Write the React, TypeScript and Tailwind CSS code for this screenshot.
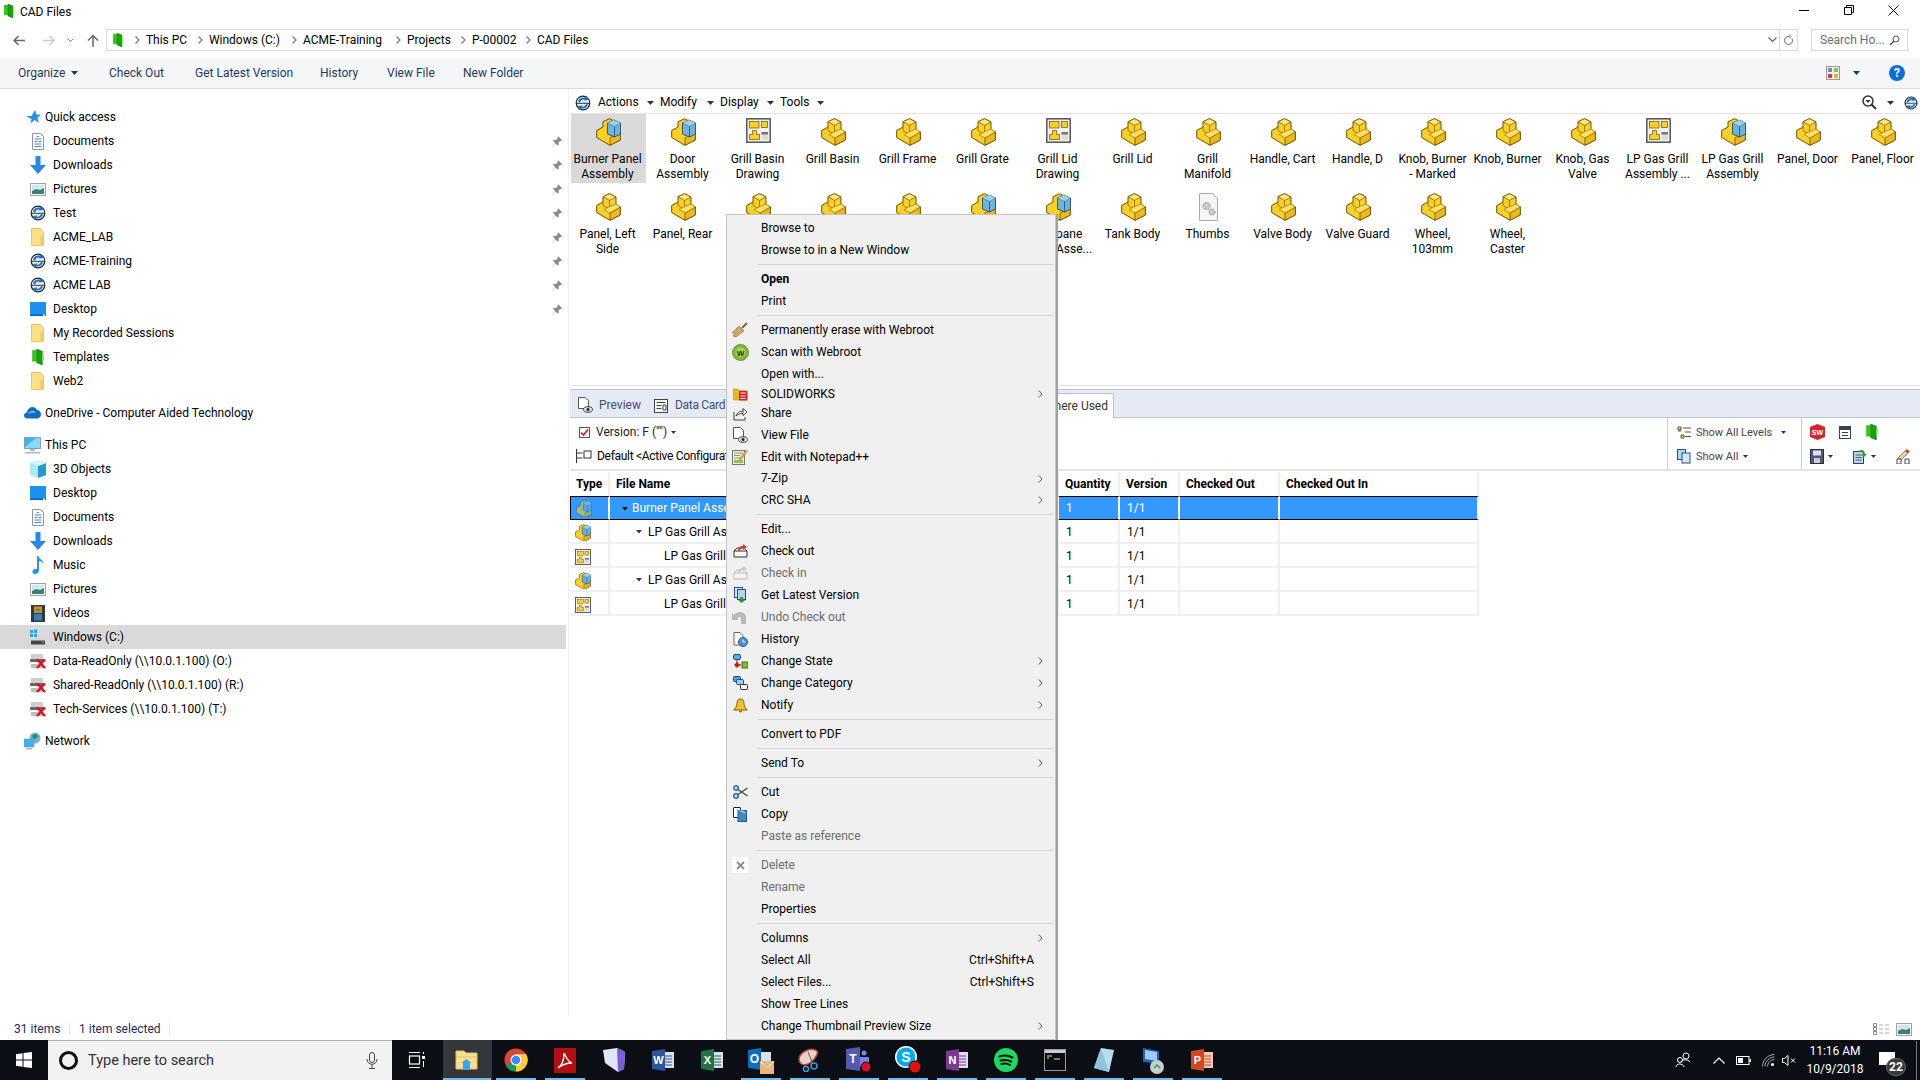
import React from "react";

type P = { s?: number };
const Part = ({ s = 25 }: P) => (
  <svg width={s} height={s * 1.12} viewBox="0 0 25 28">
    <path d="M.7 12.5 7 9V3.7L13.5.7 20 4v7.5l4.3 2.5v8L14 27.3.7 19.5z" fill="#f9cf2a" stroke="#6b5200" strokeWidth="1" />
    <path d="M7 3.7 13.5.7 20 4l-6.5 3.4z" fill="#fde67f" stroke="#6b5200" strokeWidth=".7" />
    <path d="M13.5 7.4V14M7 9v3.5l7 4M14 16.5l6-3.5 4.3 1-10.3 6z" fill="none" stroke="#8a6a00" strokeWidth=".8" />
    <path d="M14 20v7.3L24.3 22v-8z" fill="#efb81c" stroke="#6b5200" strokeWidth=".8" />
    <path d="M14 20 8 16.5 14 13.5 20 11l4.3 3z" fill="#fde067" stroke="#8a6a00" strokeWidth=".6" />
  </svg>
);
const Asm = ({ s = 25 }: P) => (
  <svg width={s} height={s * 1.12} viewBox="0 0 25 28">
    <path d="M.7 12.5 7 9V3.7L13.5.7 20 4v7.5l4.3 2.5v8L14 27.3.7 19.5z" fill="#f9cf2a" stroke="#6b5200" strokeWidth="1" />
    <path d="M14 20v7.3L24.3 22v-8z" fill="#efb81c" stroke="#6b5200" strokeWidth=".8" />
    <path d="M11.5 5 18 2l6.5 3v11l-6 3-7-3z" fill="#6fb2da" stroke="#24506e" strokeWidth=".9" />
    <path d="M11.5 5l7 3.2L24.5 5M18.5 8.2V19" fill="none" stroke="#24506e" strokeWidth=".8" />
    <path d="M11.5 5 18 2l6.5 3-6 3.2z" fill="#9cd0ea" />
  </svg>
);
const Dwg = ({ s = 25 }: P) => (
  <svg width={s} height={s} viewBox="0 0 25 25">
    <rect x=".8" y=".8" width="23.4" height="23.4" fill="#f1f1f1" stroke="#555" strokeWidth="1.5" />
    <rect x="3.5" y="3.5" width="9.5" height="6.5" fill="#f9cf2a" stroke="#6b5200" strokeWidth=".7" />
    <rect x="15.5" y="3.5" width="6" height="6" fill="#f9cf2a" stroke="#6b5200" strokeWidth=".7" />
    <path d="M6.500 12.500h4v4h3v5h-10v-5h3z" fill="#f9cf2a" stroke="#6b5200" strokeWidth=".7" />
    <rect x="15.500" y="14" width="6.500" height="8" fill="#ddd" />
    <rect x="15.500" y="14" width="6.500" height="2.500" fill="#777" />
  </svg>
);
const Thumbs = () => (
  <svg width="25" height="28" viewBox="0 0 25 28">
    <path d="M3.500.5h13l5 5v22h-18z" fill="#f6f6f6" stroke="#aaa" />
    <circle cx="10.500" cy="13" r="3.600" fill="#ccc" stroke="#888" strokeDasharray="1.500 1" />
    <circle cx="16" cy="19" r="3" fill="#ccc" stroke="#888" strokeDasharray="1.500 1" />
  </svg>
);

const Green = ({ s = 14 }: P) => (
  <svg width={s * 0.85} height={s} viewBox="0 0 12 14">
    <path d="M1 1h4v10H1z" fill="#3fc21a" />
    <path d="M5 0l5 2v12l-5-2z" fill="#16a30e" stroke="#0c7a0a" strokeWidth=".5" />
    <path d="M10 4h1.500v6H10z" fill="#9fe37f" />
  </svg>
);
const Vault = ({ s = 16 }: P) => (
  <svg width={s} height={s} viewBox="0 0 16 16">
    <circle cx="8" cy="8" r="6.800" fill="#e4edf7" stroke="#222" strokeWidth="1.200" />
    <path d="M3 6.500c1-3 4-4.500 7-4l1-1.500 2 4-4.500.5 1-1.300C7.500 4.200 5.500 5 5 7.500z" fill="#1c6fc4" />
    <path d="M13 9.500c-1 3-4 4.500-7 4L5 15l-2-4 4.500-.5-1 1.300c2 .2 4-.8 4.500-2.800z" fill="#1c6fc4" />
    <path d="M1 8.300h14" stroke="#222" strokeWidth=".9" />
  </svg>
);
const Docs = () => (
  <svg width="12" height="17" viewBox="0 0 12 17">
    <path d="M.5.500h8l3 3v13H.5z" fill="#fff" stroke="#8a97a6" />
    <path d="M2.500 6h7M2.500 8.500h3M6.500 8.500h3M2.500 11h7M2.500 13.500h7M5 3.500h2" stroke="#3a8ad6" strokeWidth="1" />
  </svg>
);
const Dl = () => (
  <svg width="16" height="18" viewBox="0 0 16 18">
    <path d="M5.500 0h5v9H16l-8 9-8-9h5.500z" fill="#2b86e0" />
  </svg>
);
const Pics = () => (
  <svg width="16" height="13" viewBox="0 0 16 13">
    <rect x=".5" y=".5" width="15" height="12" fill="#f6f8fa" stroke="#9aa5ae" />
    <rect x="2" y="2" width="12" height="9" fill="#cfe6f5" />
    <path d="M2 8l4-2 4 1 4-2v6H2z" fill="#3d7f6b" />
  </svg>
);
const Fold = () => (
  <svg width="13" height="18" viewBox="0 0 13 18">
    <path d="M.5.500h9l3 4v13H.5z" fill="#fde08a" stroke="#e8c565" />
    <path d="M9.500 8v9.500h3V8z" fill="#f3c95a" />
  </svg>
);
const Desk = () => (
  <svg width="16" height="14" viewBox="0 0 16 14">
    <rect width="16" height="14" fill="#1e90f0" />
    <rect y="12.500" width="16" height="1.500" fill="#0a5fb4" />
    <rect x="13" y="12.500" width="2" height="1.500" fill="#fff" />
  </svg>
);
const Star = () => (
  <svg width="15" height="15" viewBox="0 0 15 15">
    <path d="M9 0l1.400 4.600 4.600.2-3.600 3 1.300 5-4-2.700-4.400 3.400 1.300-4.600L0 6.300l5.600-.3z" fill="#2a8de0" />
  </svg>
);
const Cloud = () => (
  <svg width="17" height="12" viewBox="0 0 17 12">
    <path d="M3.500 11.500C1 11.500 0 9.800 0 8.500c0-1.800 1.300-2.800 2.800-3C3.500 2 6 0 8.500 0c2 0 3.500 1 4.300 2.700 2.500.2 4.200 2 4.200 4.500 0 2.500-1.800 4.300-4 4.300z" fill="#0f6cc4" />
    <path d="M5 6.500c1-2 4-2.500 6-1" stroke="#fff" strokeWidth="1" fill="none" />
  </svg>
);
const PC = () => (
  <svg width="17" height="17" viewBox="0 0 17 17">
    <rect x=".5" y=".5" width="16" height="11" fill="#3fb3ec" stroke="#8aa0b0" />
    <path d="M1 10l11-9h4v10H1z" fill="#8ed6f6" />
    <rect x="6" y="12" width="5" height="2" fill="#aab5bd" />
    <rect x="1" y="15" width="15" height="1.500" fill="#b0bac2" />
  </svg>
);
const Cube = () => (
  <svg width="16" height="18" viewBox="0 0 16 18">
    <path d="M8 0l8 3v12l-8 3-8-3V3z" fill="#aeeaf6" />
    <path d="M8 6l8-3v12l-8 3z" fill="#1e9ad6" />
    <path d="M8 6 0 3l8-3 8 3z" fill="#d6f4fb" />
  </svg>
);
const Note = () => (
  <svg width="12" height="18" viewBox="0 0 12 18">
    <path d="M5 0h1.500c.3 3 5.500 4 5 8-.8-2-3-3-4.500-3v9.500c0 2-2 3.500-4 3.500S0 16.500.5 15C1 13.500 3.300 12.500 5 13z" fill="#2b93e6" />
  </svg>
);
const Film = () => (
  <svg width="14" height="17" viewBox="0 0 14 17">
    <rect width="14" height="17" fill="#2e3a44" />
    <rect x="3" y="1.500" width="8" height="6.500" fill="#d88a2e" />
    <rect x="3" y="9" width="8" height="6.500" fill="#2f7ec7" />
    <path d="M4 6l3-3 3 3zM5 14l3-3 2 3z" fill="#3d9a4a" />
  </svg>
);
const WinC = () => (
  <svg width="16" height="16" viewBox="0 0 16 16">
    <path d="M0 1h3v3H0zM4 .5h3v3.500H4zM0 5h3v3H0zM4 5h3v3H4z" fill="#22a3ee" />
    <rect x="1" y="11" width="14" height="4.500" fill="#444" />
    <rect x="1" y="9.500" width="14" height="2" fill="#d7d7d7" />
    <rect x="12" y="12.500" width="2" height="1" fill="#4fe04f" />
  </svg>
);
const NetDrive = () => (
  <svg width="16" height="16" viewBox="0 0 16 16">
    <rect x="1" y="1" width="12" height="5" fill="#cfcfcf" />
    <rect x="0" y="6" width="14" height="3" fill="#666" />
    <rect x="1" y="11" width="12" height="4" fill="#bdbdbd" />
    <path d="M7 6.500l8 8.500M15 6.500l-8 8.500" stroke="#d81418" strokeWidth="2.400" />
  </svg>
);
const Net = () => (
  <svg width="17" height="18" viewBox="0 0 17 18">
    <circle cx="11" cy="6" r="5.500" fill="#6fb1e4" />
    <path d="M8 4c2-3 5-2 6 0-1 3-3 2-4 4z" fill="#2f8f5a" />
    <rect x="0" y="7" width="10" height="8" fill="#3fb3ec" stroke="#7d93a3" strokeWidth=".6" />
    <rect x="2" y="16" width="6" height="1.500" fill="#aab5bd" />
  </svg>
);
const Pin = () => (
  <svg width="11" height="11" viewBox="0 0 11 11">
    <path d="M6.500.5l4 4-1 .6-1-.3-2 2 .3 2-1 1L3.500 7.500.8 10.300l-.3-.2 2.700-2.900L.9 4.700l1-1 2 .3 2-2-.3-1z" fill="#8b8b8b" />
  </svg>
);

const Tri = ({ c = "#333", w = 7 }: { c?: string; w?: number }) => (
  <svg width={w} height={w / 2 + 0.5} viewBox="0 0 8 4.500" className="shrink-0">
    <path d="M0 0h8L4 4.500z" fill={c} />
  </svg>
);
const Chev = () => (
  <svg width="6" height="8" viewBox="0 0 6 8" className="shrink-0">
    <path d="M1.500.5 5 4 1.500 7.500" fill="none" stroke="#777" strokeWidth="1.200" />
  </svg>
);
const Sub = () => (
  <svg width="5" height="8" viewBox="0 0 5 8">
    <path d="M.8.5 4 4 .8 7.500" fill="none" stroke="#555" strokeWidth="1" />
  </svg>
);

/* ---- sidebar ---- */
type Row = [string, React.ReactNode, boolean?];
const quick: Row[] = [
  ["Documents", <Docs />, true],
  ["Downloads", <Dl />, true],
  ["Pictures", <Pics />, true],
  ["Test", <Vault />, true],
  ["ACME_LAB", <Fold />, true],
  ["ACME-Training", <Vault />, true],
  ["ACME LAB", <Vault />, true],
  ["Desktop", <Desk />, true],
  ["My Recorded Sessions", <Fold />],
  ["Templates", <Green s={16} />],
  ["Web2", <Fold />],
];
const pc: Row[] = [
  ["3D Objects", <Cube />],
  ["Desktop", <Desk />],
  ["Documents", <Docs />],
  ["Downloads", <Dl />],
  ["Music", <Note />],
  ["Pictures", <Pics />],
  ["Videos", <Film />],
  ["Windows (C:)", <WinC />],
  ["Data-ReadOnly (\\\\10.0.1.100) (O:)", <NetDrive />],
  ["Shared-ReadOnly (\\\\10.0.1.100) (R:)", <NetDrive />],
  ["Tech-Services (\\\\10.0.1.100) (T:)", <NetDrive />],
];
const Root = ({ icon, label }: { icon: React.ReactNode; label: string }) => (
  <div className="flex h-6 items-center">
    <div className="flex w-[45px] justify-end pr-[4px]">{icon}</div>
    <span>{label}</span>
  </div>
);
const Child = ({ r, sel }: { r: Row; sel?: boolean }) => (
  <div className={`flex h-6 items-center ${sel ? "bg-[#d9d9d9]" : ""}`}>
    <div className="flex w-[53px] justify-center pl-[27px] pr-[5px]">{r[1]}</div>
    <span className="flex-1">{r[0]}</span>
    {r[2] && <div className="mr-[3px]"><Pin /></div>}
  </div>
);

/* ---- grid ---- */
const items: [string, "p" | "a" | "d" | "t"][] = [
  ["Burner Panel\nAssembly", "a"], ["Door\nAssembly", "a"], ["Grill Basin\nDrawing", "d"], ["Grill Basin", "p"],
  ["Grill Frame", "p"], ["Grill Grate", "p"], ["Grill Lid\nDrawing", "d"], ["Grill Lid", "p"],
  ["Grill\nManifold", "p"], ["Handle, Cart", "p"], ["Handle, D", "p"], ["Knob, Burner\n- Marked", "p"],
  ["Knob, Burner", "p"], ["Knob, Gas\nValve", "p"], ["LP Gas Grill\nAssembly ...", "d"], ["LP Gas Grill\nAssembly", "a"],
  ["Panel, Door", "p"], ["Panel, Floor", "p"],
  ["Panel, Left\nSide", "p"], ["Panel, Rear", "p"], ["", "p"], ["", "p"], ["", "p"], ["", "a"],
  ["pane\nAsse...", "a"], ["Tank Body", "p"], ["Thumbs", "t"], ["Valve Body", "p"], ["Valve Guard", "p"],
  ["Wheel,\n103mm", "p"], ["Wheel,\nCaster", "p"],
];
const GI = ({ k }: { k: string }) => (k === "a" ? <Asm /> : k === "d" ? <Dwg /> : k === "t" ? <Thumbs /> : <Part />);

/* ---- menu icons ---- */
const Broom = () => (
  <svg width="16" height="16" viewBox="0 0 16 16">
    <path d="M10 6 15 1" stroke="#8a5a2a" strokeWidth="1.800" />
    <path d="M7 4l5 5-3 2-5 4-3-1 2-3-3 0z" fill="#d2a860" stroke="#8a6a30" strokeWidth=".6" />
  </svg>
);
const Web = () => (
  <svg width="17" height="17" viewBox="0 0 17 17">
    <circle cx="8.500" cy="8.500" r="8" fill="#82b53a" stroke="#6a9a30" />
    <circle cx="8.500" cy="8.500" r="5" fill="#a6cf55" />
    <text x="8.500" y="11.500" textAnchor="middle" fontSize="8" fontWeight="700" fill="#2a3a10" fontFamily="Liberation Sans">W</text>
  </svg>
);
const SwF = () => (
  <svg width="15" height="13" viewBox="0 0 15 13">
    <path d="M0 1h5l1 1.500h7V12H0z" fill="#eeb32e" stroke="#b8862a" strokeWidth=".5" />
    <rect x="6" y="3" width="8.500" height="9.500" fill="#d3272a" />
    <path d="M7.500 5h5M7.500 8h5M7.500 10.500h5" stroke="#fff" strokeWidth=".9" />
  </svg>
);
const Share = () => (
  <svg width="15" height="14" viewBox="0 0 15 14">
    <path d="M10 6v-2c-4 0-6 2-7 5 2-2 4-2.500 7-2.500v2l4-3.500L10 1.500V4" fill="#fff" stroke="#444" strokeWidth="1" />
    <path d="M1 5v8h11v-3" fill="none" stroke="#444" strokeWidth="1" />
  </svg>
);
const ViewF = () => (
  <svg width="16" height="16" viewBox="0 0 16 16">
    <path d="M1.500.5h7l3 3v8h-10z" fill="#fff" stroke="#555" />
    <ellipse cx="11" cy="12.500" rx="4.500" ry="2.800" fill="#ddd" stroke="#444" />
    <circle cx="11" cy="12.500" r="1.500" fill="#222" />
  </svg>
);
const Npp = () => (
  <svg width="16" height="16" viewBox="0 0 16 16">
    <rect x=".5" y="1.500" width="12" height="14" fill="#eef3d8" stroke="#777" />
    <path d="M2 4h9M2 6.500h6M2 9h7" stroke="#777" strokeWidth=".8" />
    <rect x="2" y="11" width="9" height="3" fill="#8fc64a" />
    <path d="M8 9l6-8 1.500 1-6 8-2 1z" fill="#e4b63a" stroke="#8a6a20" strokeWidth=".5" />
  </svg>
);
const Box = ({ c = "#333", a = "#d23a30" }: { c?: string; a?: string }) => (
  <svg width="15" height="14" viewBox="0 0 15 14">
    <path d="M1 7l3-3h7l3 3v6H1z" fill="#f4f4f4" stroke={c} />
    <path d="M1 7h13" stroke={c} />
    <path d="M5 7c0-3 2-5 5-5V0l4 3-4 3V4c-2 0-3 1-3 3z" fill={a} />
  </svg>
);
const Latest = () => (
  <svg width="13" height="16" viewBox="0 0 13 16">
    <rect x=".5" y=".5" width="8" height="10" fill="#d6e6f6" stroke="#23527c" />
    <rect x="3.500" y="2.500" width="8" height="10" fill="#b4d4ee" stroke="#23527c" />
    <path d="M6 10h3v3h2.500l-4 3-3.500-3H6z" fill="#2d9a38" />
  </svg>
);
const Undo = () => (
  <svg width="16" height="15" viewBox="0 0 16 15">
    <path d="M2 5c3-4 10-4 12 1v8h-5V8c-1-1-3-1-4 .5L7 10H0V3z" fill="#b8b8b8" />
  </svg>
);
const Hist = () => (
  <svg width="15" height="15" viewBox="0 0 15 15">
    <path d="M1 .5h6l3 3v2M10 13H1V.5" fill="#fff" stroke="#666" />
    <circle cx="10" cy="10" r="4.500" fill="#4a8fd0" stroke="#2a5a8a" />
    <path d="M10 7.500V10h2.500" stroke="#fff" fill="none" />
  </svg>
);
const State = () => (
  <svg width="15" height="15" viewBox="0 0 15 15">
    <rect x=".5" y=".5" width="7" height="5" rx="1.500" fill="#56b0ee" stroke="#1f4f80" />
    <path d="M4 6v5h4" stroke="#333" fill="none" />
    <path d="M4 8l3 3-3 3-3-3z" fill="#d81418" />
    <rect x="9" y="8" width="6" height="6" fill="#8ab92d" stroke="#4a6a10" />
  </svg>
);
const Cat = () => (
  <svg width="15" height="14" viewBox="0 0 15 14">
    <rect x=".5" y=".5" width="7" height="5" rx="1" fill="#4fa0e0" stroke="#1f4f80" />
    <rect x="3.500" y="3.500" width="7" height="5" rx="1" fill="#9cc8ec" stroke="#1f4f80" />
    <rect x="7.500" y="8.500" width="7" height="5" rx="1" fill="#f4f4f4" stroke="#333" />
  </svg>
);
const Bell = () => (
  <svg width="15" height="15" viewBox="0 0 15 15">
    <path d="M7.500 1C5 1 4 3 4 5.500 4 9 2 10 .8 12h13.400C13 10 11 9 11 5.500 11 3 10 1 7.500 1z" fill="#f5c02a" stroke="#7a5a10" />
    <path d="M5.500 12.500a2 2 0 0 0 4 0z" fill="#a8781a" />
  </svg>
);
const Cut = () => (
  <svg width="15" height="14" viewBox="0 0 15 14">
    <circle cx="3" cy="3" r="2.300" fill="#bcd9ee" stroke="#1c5f96" strokeWidth="1.300" />
    <circle cx="3" cy="11" r="2.300" fill="#bcd9ee" stroke="#1c5f96" strokeWidth="1.300" />
    <path d="M5 4.500 14.500 11M5 9.500 14.500 3" stroke="#444" strokeWidth="1.300" />
  </svg>
);
const Copy = () => (
  <svg width="14" height="15" viewBox="0 0 14 15">
    <rect x=".5" y=".5" width="7" height="10" rx=".5" fill="#fff" stroke="#222" />
    <rect x="5" y="3.500" width="8.500" height="11" fill="#3f8bbd" stroke="#1c5f96" />
    <path d="M5 3.500h5l3.500 3.500" fill="#9fd0ee" />
  </svg>
);
const Del = () => (
  <div className="flex h-4 w-4 items-center justify-center bg-white">
    <svg width="9" height="9" viewBox="0 0 9 9">
      <path d="M1 1l7 7M8 1 1 8" stroke="#8a8a8a" strokeWidth="1.800" />
    </svg>
  </div>
);

type MI = { t?: string; h?: string; i?: React.ReactNode; sub?: boolean; b?: boolean; d?: boolean; k?: string; sep?: string };
const menu: MI[] = [
  { t: "Browse to" }, { t: "Browse to in a New Window" }, { sep: "h-[7px]" },
  { t: "Open", b: true }, { t: "Print" }, { sep: "h-[7px]" },
  { t: "Permanently erase with Webroot", i: <Broom /> }, { t: "Scan with Webroot", i: <Web /> }, { t: "Open with..." },
  { t: "SOLIDWORKS", i: <SwF />, sub: true, h: "h-[18px]" }, { t: "Share", i: <Share />, h: "h-[21px]" },
  { t: "View File", i: <ViewF /> }, { t: "Edit with Notepad++", i: <Npp /> },
  { t: "7-Zip", sub: true, h: "h-[21px]" }, { t: "CRC SHA", sub: true }, { sep: "h-[7px]" },
  { t: "Edit..." }, { t: "Check out", i: <Box /> }, { t: "Check in", d: true, i: <Box c="#bbb" a="#ccc" /> },
  { t: "Get Latest Version", i: <Latest /> }, { t: "Undo Check out", d: true, i: <Undo /> }, { t: "History", i: <Hist /> },
  { t: "Change State", i: <State />, sub: true }, { t: "Change Category", i: <Cat />, sub: true }, { t: "Notify", i: <Bell />, sub: true },
  { sep: "h-[7px]" }, { t: "Convert to PDF" }, { sep: "h-[7px]" }, { t: "Send To", sub: true }, { sep: "h-[7px]" },
  { t: "Cut", i: <Cut /> }, { t: "Copy", i: <Copy /> }, { t: "Paste as reference", d: true }, { sep: "h-[7px]" },
  { t: "Delete", d: true, i: <Del /> }, { t: "Rename", d: true }, { t: "Properties" }, { sep: "h-[7px]" },
  { t: "Columns", sub: true }, { t: "Select All", k: "Ctrl+Shift+A" }, { t: "Select Files...", k: "Ctrl+Shift+S" },
  { t: "Show Tree Lines" }, { t: "Change Thumbnail Preview Size", sub: true },
];

const ContextMenu = () => (
  <div className="absolute left-[726px] top-[214px] h-[826px] w-[330px] border border-[#c4c4c4] bg-[#f0f0f0] pt-[2px] shadow-[2px_0_0_#a0a0a0]">
    {menu.map((m, i) =>
      m.sep ? (
        <div key={i} className={`flex items-center pl-[30px] pr-[2px] ${m.sep}`}>
          <div className="h-px w-full bg-[#d4d4d4]" />
        </div>
      ) : (
        <div key={i} className={`relative flex items-center pl-[34px] ${m.h ?? "h-[22px]"} ${m.d ? "text-[#6d6d6d]" : "text-black"} ${m.b ? "font-bold" : ""}`}>
          {m.i && <div className="absolute left-[3px] flex w-[20px] justify-center">{m.i}</div>}
          <span className="flex-1">{m.t}</span>
          {m.k && <span className="mr-[21px]">{m.k}</span>}
          {m.sub && <div className="mr-[12px]"><Sub /></div>}
        </div>
      )
    )}
  </div>
);

/* ---- table ---- */
const cols = ["w-[40px]", "w-[449px]", "w-[61px]", "w-[60px]", "w-[100px]", "w-[199px]"];
const rows: [React.ReactNode, string, boolean, string][] = [
  [<Asm s={16} />, "pl-[22px]", true, "Burner Panel Asse"],
  [<Asm s={16} />, "pl-[38px]", true, "LP Gas Grill Ass"],
  [<Dwg s={16} />, "pl-[54px]", false, "LP Gas Grill"],
  [<Asm s={16} />, "pl-[38px]", true, "LP Gas Grill Ass"],
  [<Dwg s={16} />, "pl-[54px]", false, "LP Gas Grill"],
];
const TableRows = () => (
  <div className="w-[909px]">
    <div className="flex h-6 font-bold">
      {["Type", "File Name", "Quantity", "Version", "Checked Out", "Checked Out In"].map((h, i) => (
        <div key={h} className={`${cols[i]} flex items-center border-r-2 border-[#f0f0f0] pl-[6px]`}>
          <span>{h}</span>
        </div>
      ))}
    </div>
    {rows.map((r, idx) => {
      const sel = idx === 0;
      const cell = sel ? "bg-[#3399ff] text-white border-y border-black border-r-2 border-r-white pt-px" : "border-b-2 border-r-2 border-[#f0f0f0] pt-[3px]";
      const vals = ["1", "1/1", "", ""];
      return (
        <div key={idx} className="flex h-6">
          <div className={`${cols[0]} ${cell} flex items-center pl-[5px] ${sel ? "border-l border-l-black" : ""}`}>
            <div className={sel ? "opacity-60" : ""}>{r[0]}</div>
          </div>
          <div className={`${cols[1]} ${cell} relative flex items-center`}>
            {r[2] && <div className={`absolute top-[10px] ${idx === 0 ? "left-[12px]" : "left-[26px]"}`}><Tri c={sel ? "#111" : "#333"} w={6} /></div>}
            <div className={`whitespace-nowrap ${r[1]}`}>{r[3]}</div>
          </div>
          {vals.map((v, j) => (
            <div key={j} className={`${cols[j + 2]} ${cell} flex items-center pl-[7px]`}>{v}</div>
          ))}
        </div>
      );
    })}
  </div>
);

/* ---- taskbar ---- */
const Tile = ({ children, on, active }: { children?: React.ReactNode; on?: boolean; active?: boolean }) => (
  <div className={`relative flex h-10 w-[49px] items-center justify-center pr-[2px] ${active ? "bg-[#33373c]" : ""}`}>
    {children}
    {on && <div className={`absolute bottom-0 h-[2px] bg-[#76b9ed] ${active ? "left-0 w-[48px]" : "left-[4px] w-[40px]"}`} />}
  </div>
);
const Letter = ({ bg, l, lines }: { bg: string; l: string; lines?: string }) => (
  <svg width="24" height="24" viewBox="0 0 24 24">
    <rect x="8" y="4" width="15" height="16" fill={lines ?? "#dde"} />
    <path d="M14 8h7M14 11h7M14 14h7M14 17h7" stroke={bg} strokeWidth="1" />
    <path d="M1 3l13-2v22L1 21z" fill={bg} />
    <text x="7.500" y="16" textAnchor="middle" fontSize="11" fontWeight="700" fill="#fff" fontFamily="Liberation Sans">{l}</text>
  </svg>
);
const Taskbar = () => (
  <div className="flex h-10 shrink-0 items-stretch bg-[#0b0f15] text-white">
    <div className="flex w-12 items-center justify-center">
      <svg width="16" height="16" viewBox="0 0 16 16"><path d="M0 2.200 6.500 1.300v6.200H0zM7.500 1.100 16 0v7.500H7.500zM0 8.500h6.500v6.200L0 13.800zM7.500 8.500H16V16l-8.500-1.100z" fill="#fff" /></svg>
    </div>
    <div className="flex w-[344px] items-center border-t border-[#b4b4b4] bg-[#f2f2f2] text-[#333]">
      <div className="ml-[11px] h-[19px] w-[19px] rounded-full border-[3px] border-[#111]" />
      <span className="ml-[10px] text-[14.5px]">Type here to search</span>
      <div className="ml-auto mr-[14px]">
        <svg width="12" height="17" viewBox="0 0 12 17"><rect x="3.500" y=".5" width="5" height="10" rx="2.500" fill="none" stroke="#444" /><path d="M1 7c0 7 10 7 10 0M6 12v4M3 16.500h6" fill="none" stroke="#444" /></svg>
      </div>
    </div>
    <div className="flex w-[51px] items-center justify-center pr-[2px]">
      <svg width="18" height="16" viewBox="0 0 18 16"><path d="M1 .5h11M1 15.500h11" stroke="#fff" /><rect x="1.500" y="4" width="10" height="8" fill="none" stroke="#fff" strokeWidth="1.200" /><rect x="14" y="4" width="3" height="3" fill="#fff" /><path d="M15.500 0v2M15.500 9v6" stroke="#fff" /></svg>
    </div>
    <Tile on active>
      <svg width="23" height="20" viewBox="0 0 23 20"><path d="M1 1h8l2 2h11v16H1z" fill="#fbdf8e" stroke="#e3c062" /><path d="M1 7h21" stroke="#e3c062" /><path d="M8 13h7v7H8z" fill="#37a4ec" /><path d="M6.500 13 11.500 9l5 4z" fill="#37a4ec" /></svg>
    </Tile>
    <Tile on>
      <svg width="24" height="24" viewBox="0 0 24 24"><circle cx="12" cy="12" r="11.500" fill="#db4437" /><path d="M12 12 2 18a11.500 11.500 0 0 0 10 5.500z" fill="#0f9d58" /><path d="M12 12 22 18a11.500 11.500 0 0 1-10 5.500z" fill="#ffcd40" /><path d="M12 12 22 18a11.500 11.500 0 0 0 0-12H12z" fill="#ffcd40" /><circle cx="12" cy="12" r="5.500" fill="#fff" /><circle cx="12" cy="12" r="4.300" fill="#4285f4" /></svg>
    </Tile>
    <Tile on>
      <svg width="22" height="25" viewBox="0 0 22 25"><rect width="22" height="25" fill="#b11010" /><path d="M4 20c4-3 6-8 6-14 0-3 3 8 8 9-4 0-9 1-14 5z" fill="none" stroke="#fff" strokeWidth="1.300" /></svg>
    </Tile>
    <Tile>
      <svg width="24" height="26" viewBox="0 0 24 26"><path d="M1 3 15 1l8 4-1 17-6 3L3 16z" fill="#dfe6f8" /><path d="M15 1l8 4-1 17-6 3z" fill="#7b5bd6" /></svg>
    </Tile>
    <Tile><Letter bg="#2b579a" l="W" /></Tile>
    <Tile><Letter bg="#217346" l="X" /></Tile>
    <Tile on>
      <svg width="26" height="27" viewBox="0 0 26 27"><path d="M10 5h13v15H10z" fill="#cfe5f7" /><path d="M0 3l13-2v22L0 21z" fill="#0f6cbd" /><text x="6.500" y="16" textAnchor="middle" fontSize="12" fontWeight="700" fill="#fff" fontFamily="Liberation Sans">O</text><rect x="12" y="14" width="14" height="13" fill="#e8b77c" /><path d="M12 14l7 7 7-7" fill="none" stroke="#fff" strokeWidth="1" /></svg>
    </Tile>
    <Tile on>
      <svg width="24" height="24" viewBox="0 0 24 24"><path d="M1 11C2 3 14-1 19 3c2 3-5 13-12 14-4 0-6-3-6-6z" fill="#e8d0cc" stroke="#b9443a" strokeWidth="1.500" /><path d="M10 4l5 12" stroke="#555" /><circle cx="16" cy="18" r="3" fill="none" stroke="#3f9ad8" strokeWidth="1.500" /><circle cx="8" cy="21" r="2.500" fill="none" stroke="#3f9ad8" strokeWidth="1.500" /></svg>
    </Tile>
    <Tile on>
      <div className="relative">
        <svg width="26" height="28" viewBox="0 0 26 28"><path d="M0 3l14-2v24L0 23z" fill="#5558af" /><circle cx="18" cy="7" r="2.500" fill="#7b83eb" /><rect x="14" y="11" width="9" height="10" fill="#7b83eb" /><text x="7" y="17" textAnchor="middle" fontSize="12" fontWeight="700" fill="#fff" fontFamily="Liberation Sans">T</text><circle cx="20" cy="21" r="5" fill="#d8102a" stroke="#0b0f15" /></svg>
      </div>
    </Tile>
    <Tile on>
      <svg width="28" height="30" viewBox="0 0 28 30"><circle cx="12" cy="12" r="11" fill="#fff" /><circle cx="12" cy="12" r="9.500" fill="#00a9e8" /><text x="12" y="17" textAnchor="middle" fontSize="14" fontWeight="700" fill="#fff" fontFamily="Liberation Sans">S</text><circle cx="21" cy="22" r="6" fill="#e01010" stroke="#0b0f15" /></svg>
    </Tile>
    <Tile on><Letter bg="#7b3a8e" l="N" /></Tile>
    <Tile on>
      <svg width="24" height="24" viewBox="0 0 24 24"><circle cx="12" cy="12" r="12" fill="#1ed760" /><path d="M5.500 8.500c4-1.500 9-1 13 1M6.500 12.500c3.500-1 7.500-.6 10.500 1M7.500 16c2.800-.7 6-.4 8.500 1" fill="none" stroke="#0b0f15" strokeWidth="2" strokeLinecap="round" /></svg>
    </Tile>
    <Tile on>
      <svg width="22" height="22" viewBox="0 0 22 22"><rect x=".5" y=".5" width="21" height="21" fill="#0c0c0c" stroke="#999" /><rect x="1" y="1" width="20" height="3" fill="#ccc" /><path d="M3 7h5M3 9h2M10 10h6" stroke="#ddd" /></svg>
    </Tile>
    <Tile on>
      <svg width="22" height="26" viewBox="0 0 22 26"><path d="M8 1l13 2-5 22L1 21z" fill="#b9dcef" /><path d="M8 1l-7 20 15 4z" fill="#8ec3de" /></svg>
    </Tile>
    <Tile on>
      <svg width="24" height="27" viewBox="0 0 24 27"><path d="M2 1l16 3v13L2 15z" fill="#1e5fc2" /><path d="M4 3l12 2v9L4 12z" fill="#9ecbf0" /><circle cx="16" cy="20" r="7" fill="#c9ccd0" /><path d="M13 21l3-3 3 3" stroke="#2a9a38" fill="none" strokeWidth="1.300" /></svg>
    </Tile>
    <Tile on><Letter bg="#d24726" l="P" lines="#f2c6b8" /></Tile>
    <div className="flex-1" />
    <div className="flex items-center">
      <div className="flex w-[36px] justify-center">
        <svg width="16" height="16" viewBox="0 0 16 16"><circle cx="11" cy="4" r="3" fill="none" stroke="#fff" /><path d="M6 10c1-3 7-3 9 0" fill="none" stroke="#fff" /><circle cx="5" cy="8" r="2.500" fill="none" stroke="#fff" /><path d="M1 15c0-4 7-4 8 0" fill="none" stroke="#fff" /></svg>
      </div>
      <div className="flex w-[30px] justify-center pl-[6px]">
        <svg width="12" height="7" viewBox="0 0 12 7"><path d="M.5 6.500 6 1l5.500 5.500" fill="none" stroke="#fff" strokeWidth="1.200" /></svg>
      </div>
      <div className="flex w-[24px] justify-center">
        <svg width="15" height="9" viewBox="0 0 15 9"><rect x=".5" y=".5" width="12.500" height="8" fill="none" stroke="#fff" /><rect x="2" y="2" width="5" height="5" fill="#fff" /><rect x="13.500" y="3" width="1.500" height="3" fill="#fff" /></svg>
      </div>
      <div className="flex w-[26px] justify-center">
        <svg width="13" height="13" viewBox="0 0 13 13"><path d="M.5 12.500C.5 6 6 .5 12.500.5M3 12.500C3 7.500 7.500 3 12.500 3M5.500 12.500C5.500 9 9 5.500 12.500 5.500" fill="none" stroke="#ccc" strokeWidth=".8" /><circle cx="10.500" cy="10.500" r="1.500" fill="#fff" /></svg>
      </div>
      <div className="flex w-[16px] justify-center">
        <svg width="14" height="11" viewBox="0 0 14 11"><path d="M.5 3.500h2L6 .5v10L2.500 7.500h-2z" fill="none" stroke="#fff" /><path d="M9 3.500l4 4M13 3.500l-4 4" stroke="#fff" /></svg>
      </div>
      <div className="flex w-[76px] flex-col items-center text-[12px] leading-[18px]">
        <span>11:16 AM</span>
        <span>10/9/2018</span>
      </div>
      <div className="relative flex h-10 w-[43px]">
        <div className="ml-[6px] mt-[12px] h-[13px] w-[16px] bg-white" />
        <div className="absolute left-[13px] top-[18px] flex h-[18px] w-[20px] items-center justify-center rounded-full border border-[#666] bg-[#3a3a3a] text-[12px] font-bold">22</div>
      </div>
    </div>
    <div className="mt-[1px] w-px bg-[#777]" />
    <div className="w-[3px]" />
  </div>
);

const crumbs: [string, string][] = [
  ["This PC", "w-[51px]"],
  ["Windows (C:)", "w-[82px]"],
  ["ACME-Training", "w-[92px]"],
  ["Projects", "w-[53px]"],
  ["P-00002", "w-[53px]"],
  ["CAD Files", "w-[60px]"],
];

export default function App() {
  return (
    <div className="relative flex h-[1080px] w-[1920px] flex-col overflow-hidden bg-white text-[12px] leading-[15px] text-black [font-family:Roboto,'Liberation_Sans',sans-serif]">
      {/* Title bar */}
      <div className="flex h-[29px] shrink-0 items-start">
        <div className="ml-[3px] mt-[4px]"><Green s={14} /></div>
        <span className="ml-[5px] mt-[5px]">CAD Files</span>
        <div className="ml-auto mr-[4px] flex">
          <div className="flex h-5 w-[45px] items-center justify-center"><div className="h-px w-[10px] bg-black" /></div>
          <div className="flex h-5 w-[45px] items-center justify-center">
            <svg width="10" height="10" viewBox="0 0 10 10"><path d="M2.500 2.500V.5h7v7h-2M.5 2.500h7v7h-7z" fill="none" stroke="#000" /></svg>
          </div>
          <div className="flex h-5 w-[45px] items-center justify-center">
            <svg width="11" height="11" viewBox="0 0 11 11"><path d="M.5.5l10 10M10.500.5l-10 10" stroke="#000" /></svg>
          </div>
        </div>
      </div>
      {/* Address */}
      <div className="flex h-[29px] shrink-0 items-start">
        <div className="flex h-[22px] w-[106px] items-center">
          <svg className="ml-[13px]" width="12" height="11" viewBox="0 0 12 11"><path d="M12 5.500H1.500M5.500 1 1 5.500 5.500 10" fill="none" stroke="#666" strokeWidth="1.500" /></svg>
          <svg className="ml-[18px]" width="12" height="11" viewBox="0 0 12 11"><path d="M0 5.500h10.500M6.500 1 11 5.500 6.500 10" fill="none" stroke="#ccc" strokeWidth="1.500" /></svg>
          <svg className="ml-[12px]" width="7" height="4" viewBox="0 0 7 4"><path d="M.5.500 3.500 3.500 6.500.5" fill="none" stroke="#888" /></svg>
          <svg className="ml-[13px]" width="12" height="13" viewBox="0 0 12 13"><path d="M6 13V2M1 6.500 6 1.500l5 5" fill="none" stroke="#666" strokeWidth="1.500" /></svg>
        </div>
        <div className="flex h-[22px] w-[1692px] items-center border border-[#d9d9d9] text-[12px]">
          <div className="ml-[5px] mr-[10px]"><Green s={14} /></div>
          {crumbs.map(([c, w]) => (
            <React.Fragment key={c}>
              <Chev />
              <span className={`ml-[6px] whitespace-nowrap ${w}`}>{c}</span>
            </React.Fragment>
          ))}
          <div className="ml-auto flex h-full items-center">
            <svg width="9" height="6" viewBox="0 0 9 6"><path d="M.5.500 4.500 4.500 8.500.5" fill="none" stroke="#666" strokeWidth="1.200" /></svg>
            <div className="ml-[2px] h-full w-px bg-[#d9d9d9]" />
            <svg className="ml-[4px] mr-[3px]" width="10" height="12" viewBox="0 0 10 12"><path d="M8 4.500a4 4 0 1 1-3-2H3.500M5 .5l2 2-2 2" fill="none" stroke="#666" /></svg>
          </div>
        </div>
        <div className="ml-[13px] flex h-[22px] w-[97px] items-center justify-between border border-[#d9d9d9] pl-[8px] pr-[7px] text-[#6d6d6d]">
          <span>Search Ho...</span>
          <svg width="11" height="11" viewBox="0 0 11 11"><circle cx="7" cy="4" r="3" fill="none" stroke="#555" /><path d="M5 6 1 10" stroke="#555" strokeWidth="1.500" /></svg>
        </div>
      </div>
      {/* Command bar */}
      <div className="flex h-[31px] shrink-0 items-center border-b border-[#d9d9d9] bg-[#f5f6f7] pl-[18px] text-[#1e395b]">
        <div className="flex w-[91px] items-center">
          <span>Organize</span>
          <div className="ml-[6px]"><Tri c="#1e395b" /></div>
        </div>
        <span className="w-[86px]">Check Out</span>
        <span className="w-[125px]">Get Latest Version</span>
        <span className="w-[67px]">History</span>
        <span className="w-[76px]">View File</span>
        <span>New Folder</span>
        <div className="ml-auto flex items-center">
          <svg width="14" height="14" viewBox="0 0 14 14"><rect x=".5" y=".5" width="13" height="13" fill="#eee" stroke="#999" /><rect x="2" y="2" width="4" height="4" fill="#5a93d0" /><rect x="8" y="2" width="4" height="4" fill="#8cbf4a" /><rect x="2" y="8" width="4" height="4" fill="#d0403a" /><rect x="8" y="8" width="4" height="4" fill="#e0b040" /></svg>
          <div className="ml-[13px]"><Tri c="#1e395b" /></div>
          <div className="ml-[29px] mr-[15px] flex h-4 w-4 items-center justify-center rounded-full bg-[#0a6fd0] text-[12px] font-bold text-white">?</div>
        </div>
      </div>
      {/* Main */}
      <div className="flex min-h-0 flex-1">
        {/* Nav pane */}
        <div className="w-[569px] shrink-0 border-r border-[#f0f0f0] pr-[2px] pt-[16px]">
          <Root icon={<Star />} label="Quick access" />
          {quick.map((r) => <Child key={r[0]} r={r} />)}
          <div className="h-[8px]" />
          <Root icon={<Cloud />} label="OneDrive - Computer Aided Technology" />
          <div className="h-[8px]" />
          <Root icon={<PC />} label="This PC" />
          {pc.map((r) => <Child key={r[0]} r={r} sel={r[0] === "Windows (C:)"} />)}
          <div className="h-[8px]" />
          <Root icon={<Net />} label="Network" />
        </div>
        {/* Right pane */}
        <div className="ml-px flex min-w-0 flex-1 flex-col">
          <div className="flex h-[25px] shrink-0 items-center border-b border-[#e3e3e3] pt-[3px]">
            <div className="ml-[5px]"><Vault /></div>
            <span className="ml-[7px] w-[49px]">Actions</span>
            <Tri />
            <span className="ml-[6px] w-[47px]">Modify</span>
            <Tri />
            <span className="ml-[6px] w-[47px]">Display</span>
            <Tri />
            <span className="ml-[6px] w-[37px]">Tools</span>
            <Tri />
            <div className="ml-auto flex items-center">
              <svg width="15" height="15" viewBox="0 0 15 15"><circle cx="6" cy="6" r="5" fill="none" stroke="#333" strokeWidth="1.500" /><path d="M9.500 9.500 14 14" stroke="#333" strokeWidth="2" /><path d="M3.500 5h5L6 8z" fill="#333" /></svg>
              <div className="ml-[10px]"><Tri /></div>
              <div className="ml-[10px] mr-[2px]"><Vault s={14} /></div>
            </div>
          </div>
          <div className="h-[271px] shrink-0 overflow-hidden pl-px">
            <div className="grid grid-cols-[repeat(18,75px)] auto-rows-[75px]">
              {items.map(([l, k], i) => (
                <div key={i} className={`flex h-[69px] w-[75px] flex-col items-center pt-[4px] ${i === 0 ? "bg-[#d9d9d9]" : ""}`}>
                  <div className="flex h-[28px] items-start justify-center"><GI k={k} /></div>
                  {l && (
                    <div className={`mt-[6px] whitespace-pre-line ${i === 24 ? "self-start pl-[35px] text-left" : "pr-[2px] text-center"}`}>{l}</div>
                  )}
                </div>
              ))}
            </div>
          </div>
          {/* Preview tabs */}
          <div className="mb-[3px] h-px shrink-0 bg-[#e0e6ef]" />
          <div className="flex h-[29px] shrink-0 items-end border-y border-t-[#b9c4d6] border-b-[#b7c4d8] bg-[#e6eaf5] text-[#4a4a80]">
            <div className="mb-[4px] ml-[7px] flex items-center"><ViewF /><span className="ml-[6px] w-[40px]">Preview</span></div>
            <div className="mb-[4px] ml-[15px] flex items-center">
              <svg width="14" height="14" viewBox="0 0 14 14"><rect x=".5" y=".5" width="13" height="13" fill="#f6f6f6" stroke="#444" /><path d="M2.500 3.500h9M2.500 6.500h5M2.500 9.500h5M9 6h3v5H9z" stroke="#444" fill="none" /></svg>
              <span className="ml-[7px] w-[51px] whitespace-nowrap tracking-[-0.3px]">Data Card</span>
            </div>
            <div className="-mb-px ml-[330px] flex h-[25px] w-[58px] items-center justify-end overflow-hidden whitespace-nowrap border-r border-t border-r-[#b7c4d8] border-t-[#b7c4d8] bg-white pr-[5px] text-[#333]">Where Used</div>
          </div>
          {/* Options */}
          <div className="mb-px flex h-[53px] shrink-0 border-b-2 border-[#e5e5e5]">
            <div className="w-[1097px]">
              <div className="flex h-6 items-center pl-[9px] pt-[4px] text-[#222]">
                <svg width="11" height="11" viewBox="0 0 11 11"><rect x=".5" y=".5" width="10" height="10" fill="#fff" stroke="#555" /><path d="M2 5.500 4.500 8 9 2.500" fill="none" stroke="#d81418" strokeWidth="1.600" /></svg>
                <span className="ml-[6px]">Version: F ("")</span>
                <div className="ml-[4px]"><Tri w={5} /></div>
              </div>
              <div className="flex h-6 items-center pl-[6px] pt-[4px]">
                <svg width="16" height="14" viewBox="0 0 16 14"><path d="M.5 0v14M.5 4h6M.5 9h6" stroke="#333" fill="none" /><rect x="8" y="2" width="7" height="7" fill="none" stroke="#333" /></svg>
                <span className="ml-[5px] whitespace-nowrap tracking-[-0.3px]">Default &lt;Active Configurat</span>
              </div>
            </div>
            <div className="w-[134px] border-l border-[#c8d0dc] pl-[9px]">
              <div className="flex h-6 items-center pt-[4px] text-[11px] text-[#444]">
                <svg width="14" height="13" viewBox="0 0 14 13"><path d="M1 1h3v3H1zM4 9h3v3H4zM1 5h3" fill="#eed35a" stroke="#554" /><path d="M6 2h8M8 6h6M8 10.500h6" stroke="#555" /></svg>
                <span className="ml-[5px] w-[85px] whitespace-nowrap">Show All Levels</span>
                <Tri w={5} />
              </div>
              <div className="flex h-6 items-center pt-[4px] text-[11px] text-[#444]">
                <svg width="14" height="15" viewBox="0 0 14 15"><rect x=".5" y=".5" width="8" height="10" fill="#b6d6f0" stroke="#23527c" /><rect x="5" y="4" width="8" height="10" fill="#d6e8f6" stroke="#23527c" /></svg>
                <span className="ml-[5px]">Show All</span>
                <div className="ml-[5px]"><Tri w={5} /></div>
              </div>
            </div>
            <div className="flex-1 border-l border-[#c8d0dc] pl-[8px]">
              <div className="flex h-6 items-center gap-[14px] pt-[4px]">
                <svg width="15" height="16" viewBox="0 0 15 16"><path d="M7.500 0 15 3v10l-7.500 3L0 13V3z" fill="#d3272a" /><text x="7.500" y="11" textAnchor="middle" fontSize="7" fontWeight="700" fill="#fff" fontFamily="Liberation Sans">SW</text></svg>
                <svg width="12" height="13" viewBox="0 0 12 13"><rect x=".5" y=".5" width="11" height="12" fill="#fff" stroke="#345" /><rect x="1" y="1" width="10" height="3" fill="#345" /><path d="M3 6.500h6M3 9.500h6" stroke="#345" /></svg>
                <Green s={16} />
              </div>
              <div className="flex h-6 items-center pt-[4px]">
                <svg width="14" height="15" viewBox="0 0 14 15"><rect x=".5" y=".5" width="13" height="14" fill="#557" stroke="#234" /><rect x="3" y="1.500" width="8" height="5" fill="#d9e3ee" /><rect x="4" y="9" width="6" height="5" fill="#ccc" /></svg>
                <div className="ml-[4px]"><Tri w={5} /></div>
                <svg className="ml-[20px]" width="14" height="15" viewBox="0 0 14 15"><rect x=".5" y="2.500" width="10" height="12" fill="#b6d6f0" stroke="#345" /><path d="M2.500 6h6M2.500 8.500h6M2.500 11h6" stroke="#345" strokeWidth=".8" /><path d="M6 2c2-2 6-1 6 3h2l-3 3-3-3h2c0-2-2-2-4-3z" fill="#2d9a38" /></svg>
                <div className="ml-[4px]"><Tri w={5} /></div>
                <svg className="ml-[20px]" width="15" height="15" viewBox="0 0 15 15"><path d="M2 9 9 2l3 2-7 7z" fill="#e8d8a0" stroke="#555" strokeWidth=".7" /><path d="M9 2l2-2 3 3-2 1z" fill="#d83030" /><path d="M1 10h4v5H1zM9 10h4v5H9z" fill="#fff" stroke="#444" /></svg>
              </div>
            </div>
          </div>
          <TableRows />
          <div className="flex-1" />
        </div>
      </div>
      {/* Status bar */}
      <div className="flex h-[25px] shrink-0 items-center pt-[3px]">
        <span className="ml-[14px] w-[55px] text-[#1f2a55]">31 items</span>
        <div className="h-[12px] w-px bg-[#e6e6e6]" />
        <span className="ml-[9px] w-[90px] text-[#1f2a55]">1 item selected</span>
        <div className="h-[12px] w-px bg-[#e6e6e6]" />
        <div className="ml-auto mr-[8px] flex items-center gap-[7px]">
          <svg width="16" height="12" viewBox="0 0 16 12"><path d="M.5.500h3v3h-3zM.5 4.500h3v3h-3zM.5 8.500h3v3h-3z" fill="none" stroke="#888" /><path d="M6 2h4M12 2h4M6 6h4M12 6h4M6 10h4M12 10h4" stroke="#aaa" /></svg>
          <Pics />
        </div>
      </div>
      <Taskbar />
      <ContextMenu />
    </div>
  );
}
